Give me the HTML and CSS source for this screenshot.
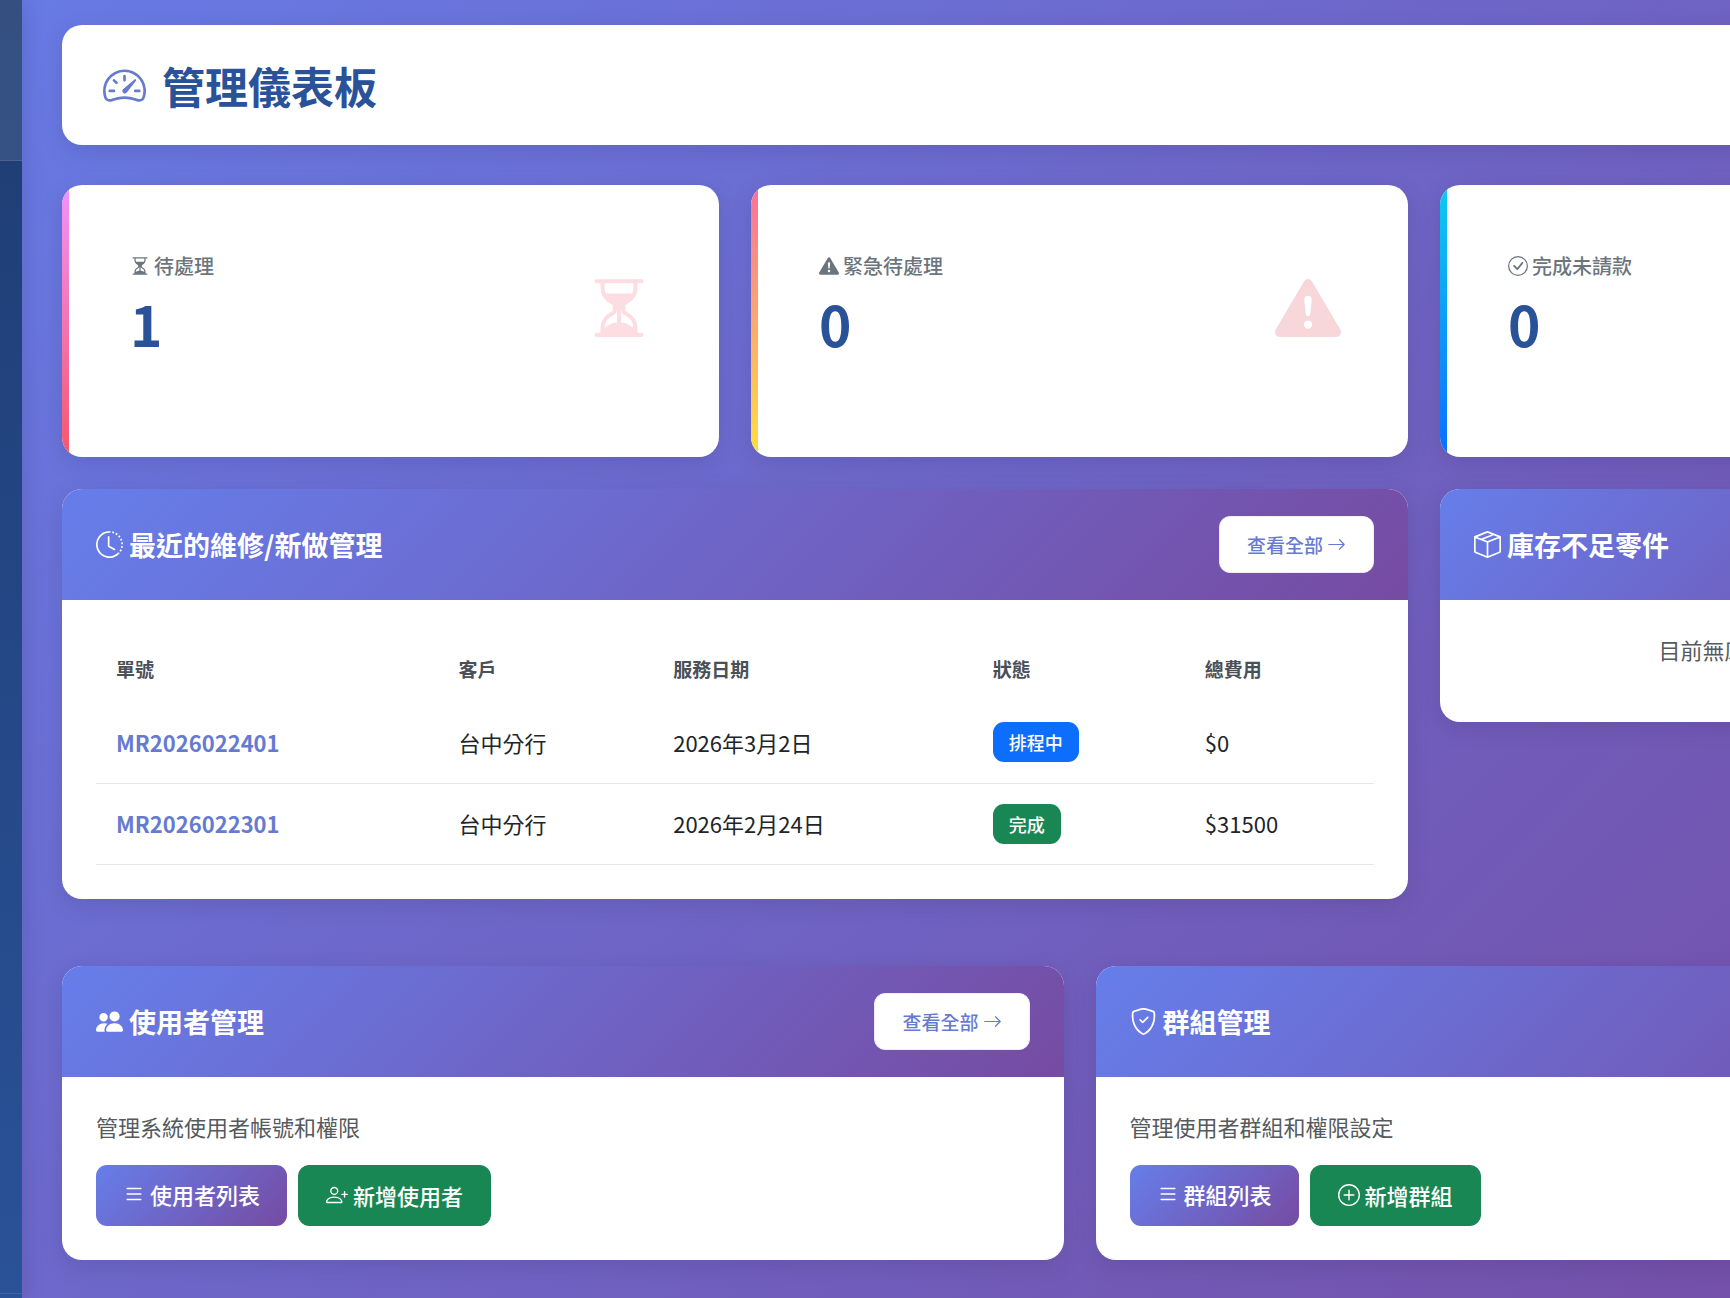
FILE: index.html
```html
<!DOCTYPE html>
<html lang="zh-Hant">
<head>
<meta charset="utf-8">
<meta name="viewport" content="width=device-width, initial-scale=1">
<title>管理儀表板</title>
<link rel="stylesheet" href="styles.css">
</head>
<body>
<svg class="sprite" aria-hidden="true">
  <symbol id="speedometer" viewBox="0 0 16 16"><path d="M8 4a.5.5 0 0 1 .5.5V6a.5.5 0 0 1-1 0V4.5A.5.5 0 0 1 8 4M3.732 5.732a.5.5 0 0 1 .707 0l.915.914a.5.5 0 1 1-.708.708l-.914-.915a.5.5 0 0 1 0-.707M2 10a.5.5 0 0 1 .5-.5h1.586a.5.5 0 0 1 0 1H2.5A.5.5 0 0 1 2 10m9.5 0a.5.5 0 0 1 .5-.5h1.5a.5.5 0 0 1 0 1H12a.5.5 0 0 1-.5-.5m.754-4.246a.39.39 0 0 0-.527-.02L7.547 9.31a.91.91 0 1 0 1.302 1.258l3.434-4.297a.39.39 0 0 0-.029-.518z"/><path fill-rule="evenodd" d="M0 10a8 8 0 1 1 15.547 2.661c-.442 1.253-1.845 1.602-2.932 1.25C11.309 13.488 9.475 13 8 13c-1.474 0-3.31.488-4.615.911-1.087.352-2.49.003-2.932-1.25A8 8 0 0 1 0 10m8-7a7 7 0 0 0-6.603 9.329c.203.575.923.876 1.68.63C4.397 12.533 6.358 12 8 12s3.604.532 4.923.96c.757.245 1.477-.056 1.68-.631A7 7 0 0 0 8 3"/></symbol>
  <symbol id="hourglass" viewBox="0 0 16 16"><path d="M2.5 15a.5.5 0 1 1 0-1h1v-1a4.5 4.5 0 0 1 2.557-4.06c.29-.139.443-.377.443-.59v-.7c0-.213-.154-.451-.443-.59A4.5 4.5 0 0 1 3.5 3V2h-1a.5.5 0 0 1 0-1h11a.5.5 0 0 1 0 1h-1v1a4.5 4.5 0 0 1-2.557 4.06c-.29.139-.443.377-.443.59v.7c0 .213.154.451.443.59A4.5 4.5 0 0 1 12.5 13v1h1a.5.5 0 0 1 0 1zm2-13v1c0 .537.12 1.045.337 1.5h6.326c.216-.455.337-.963.337-1.5V2zm3 6.35c0 .701-.478 1.236-1.011 1.492A3.5 3.5 0 0 0 4.5 13s.866-1.299 3-1.48zm1 0v3.17c2.134.181 3 1.48 3 1.48a3.5 3.5 0 0 0-1.989-3.158C8.978 9.586 8.5 9.052 8.5 8.351z"/></symbol>
  <symbol id="warning" viewBox="0 0 16 16"><path d="M8.982 1.566a1.13 1.13 0 0 0-1.96 0L.165 13.233c-.457.778.091 1.767.98 1.767h13.713c.889 0 1.438-.99.98-1.767zM8 5c.535 0 .954.462.9.995l-.35 3.507a.552.552 0 0 1-1.1 0L7.1 5.995A.905.905 0 0 1 8 5m.002 6a1 1 0 1 1 0 2 1 1 0 0 1 0-2"/></symbol>
  <symbol id="check-circle" viewBox="0 0 16 16"><path d="M8 15A7 7 0 1 1 8 1a7 7 0 0 1 0 14m0 1A8 8 0 1 0 8 0a8 8 0 0 0 0 16"/><path d="m10.97 4.97-.02.022-3.473 4.425-2.093-2.094a.75.75 0 0 0-1.06 1.06L6.97 11.03a.75.75 0 0 0 1.079-.02l3.992-4.99a.75.75 0 0 0-1.071-1.05"/></symbol>
  <symbol id="clock" viewBox="0 0 16 16"><path d="M8.515 1.019A7 7 0 0 0 8 1V0a8 8 0 0 1 .589.022zm2.004.45a7 7 0 0 0-.985-.299l.219-.976q.576.129 1.126.342zm1.37.71a7 7 0 0 0-.439-.27l.493-.87a8 8 0 0 1 .979.654l-.615.789a7 7 0 0 0-.418-.302zm1.834 1.79a7 7 0 0 0-.653-.796l.724-.69q.406.429.747.91zm.744 1.352a7 7 0 0 0-.214-.468l.893-.45a8 8 0 0 1 .45 1.088l-.95.313a7 7 0 0 0-.179-.483m.53 2.507a7 7 0 0 0-.1-1.025l.985-.17q.1.58.116 1.17zm-.131 1.538q.05-.254.081-.51l.993.123a8 8 0 0 1-.23 1.155l-.964-.267q.069-.247.12-.501m-.952 2.379q.276-.436.486-.908l.914.405q-.24.54-.555 1.038zm-.964 1.205q.183-.183.35-.378l.758.653a8 8 0 0 1-.401.432z"/><path d="M8 1a7 7 0 1 0 4.95 11.95l.707.707A8.001 8.001 0 1 1 8 0z"/><path d="M7.5 3a.5.5 0 0 1 .5.5v5.21l3.248 1.856a.5.5 0 0 1-.496.868l-3.5-2A.5.5 0 0 1 7 9V3.5a.5.5 0 0 1 .5-.5"/></symbol>
  <symbol id="arrow" viewBox="0 0 16 16"><path fill-rule="evenodd" d="M1 8a.5.5 0 0 1 .5-.5h11.793l-3.147-3.146a.5.5 0 0 1 .708-.708l4 4a.5.5 0 0 1 0 .708l-4 4a.5.5 0 0 1-.708-.708L13.293 8.5H1.5A.5.5 0 0 1 1 8"/></symbol>
  <symbol id="box" viewBox="0 0 16 16"><path d="M8.186 1.113a.5.5 0 0 0-.372 0L1.846 3.5l2.404.961L10.404 2zm3.564 1.426L5.596 5 8 5.961 14.154 3.5zm3.25 1.7-6.5 2.6v7.922l6.5-2.6V4.24zM7.5 14.762V6.838L1 4.239v7.923zM7.443.184a1.5 1.5 0 0 1 1.114 0l7.129 2.852A.5.5 0 0 1 16 3.5v8.662a1 1 0 0 1-.629.928l-7.185 2.874a.5.5 0 0 1-.372 0L.63 13.09a1 1 0 0 1-.63-.928V3.5a.5.5 0 0 1 .314-.464z"/></symbol>
  <symbol id="people" viewBox="0 0 16 16"><path d="M7 14s-1 0-1-1 1-4 5-4 5 3 5 4-1 1-1 1zm4-6a3 3 0 1 0 0-6 3 3 0 0 0 0 6m-5.784 6A2.24 2.24 0 0 1 5 13c0-1.355.68-2.75 1.936-3.72A6.3 6.3 0 0 0 5 9c-4 0-5 3-5 4s1 1 1 1zM4.5 8a2.5 2.5 0 1 0 0-5 2.5 2.5 0 0 0 0 5"/></symbol>
  <symbol id="shield" viewBox="0 0 16 16"><path d="M5.338 1.59a61 61 0 0 0-2.837.856.48.48 0 0 0-.328.39c-.554 4.157.726 7.19 2.253 9.188a10.7 10.7 0 0 0 2.287 2.233c.346.244.652.42.893.533q.18.085.293.118a1 1 0 0 0 .101.025 1 1 0 0 0 .1-.025q.114-.034.294-.118c.24-.113.547-.29.893-.533a10.7 10.7 0 0 0 2.287-2.233c1.527-1.997 2.807-5.031 2.253-9.188a.48.48 0 0 0-.328-.39c-.651-.213-1.75-.56-2.837-.855C9.552 1.29 8.531 1.067 8 1.067c-.53 0-1.552.223-2.662.524zM5.072.56C6.157.265 7.31 0 8 0s1.843.265 2.928.56c1.11.3 2.229.655 2.887.87a1.54 1.54 0 0 1 1.044 1.262c.596 4.477-.787 7.795-2.465 9.99a11.8 11.8 0 0 1-2.517 2.453 7 7 0 0 1-1.048.625c-.28.132-.581.24-.829.24s-.548-.108-.829-.24a7 7 0 0 1-1.048-.625 11.8 11.8 0 0 1-2.517-2.453C1.928 10.487.545 7.169 1.141 2.692A1.54 1.54 0 0 1 2.185 1.43 63 63 0 0 1 5.072.56"/><path d="M10.854 5.146a.5.5 0 0 1 0 .708l-3 3a.5.5 0 0 1-.708 0l-1.5-1.5a.5.5 0 1 1 .708-.708L7.5 7.793l2.646-2.647a.5.5 0 0 1 .708 0"/></symbol>
  <symbol id="list" viewBox="0 0 16 16"><path fill-rule="evenodd" d="M2.5 12a.5.5 0 0 1 .5-.5h10a.5.5 0 0 1 0 1H3a.5.5 0 0 1-.5-.5m0-4a.5.5 0 0 1 .5-.5h10a.5.5 0 0 1 0 1H3a.5.5 0 0 1-.5-.5m0-4a.5.5 0 0 1 .5-.5h10a.5.5 0 0 1 0 1H3a.5.5 0 0 1-.5-.5"/></symbol>
  <symbol id="person-plus" viewBox="0 0 16 16"><path d="M6 8a3 3 0 1 0 0-6 3 3 0 0 0 0 6m2-3a2 2 0 1 1-4 0 2 2 0 0 1 4 0m4 8c0 1-1 1-1 1H1s-1 0-1-1 1-4 6-4 6 3 6 4m-1-.004c-.001-.246-.154-.986-.832-1.664C9.516 10.68 8.289 10 6 10s-3.516.68-4.168 1.332c-.678.678-.83 1.418-.832 1.664z"/><path fill-rule="evenodd" d="M13.5 5a.5.5 0 0 1 .5.5V7h1.5a.5.5 0 0 1 0 1H14v1.5a.5.5 0 0 1-1 0V8h-1.5a.5.5 0 0 1 0-1H13V5.5a.5.5 0 0 1 .5-.5"/></symbol>
  <symbol id="plus-circle" viewBox="0 0 16 16"><path d="M8 15A7 7 0 1 1 8 1a7 7 0 0 1 0 14m0 1A8 8 0 1 0 8 0a8 8 0 0 0 0 16"/><path d="M8 4a.5.5 0 0 1 .5.5v3h3a.5.5 0 0 1 0 1h-3v3a.5.5 0 0 1-1 0v-3h-3a.5.5 0 0 1 0-1h3v-3A.5.5 0 0 1 8 4"/></symbol>
</svg>
<div class="app">
  <aside class="sidebar">
    <div class="sidebar-head"></div>
    <div class="sidebar-foot"></div>
  </aside>
  <main class="main">
    <header class="page-header">
      <h1 class="page-title"><svg class="icon"><use href="#speedometer"/></svg>管理儀表板</h1>
    </header>

    <section class="stats">
      <article class="stat stat-pending">
        <div>
          <h2 class="stat-label"><svg class="icon"><use href="#hourglass"/></svg>待處理</h2>
          <p class="stat-value">1</p>
        </div>
        <svg class="stat-icon"><use href="#hourglass"/></svg>
      </article>
      <article class="stat stat-urgent">
        <div>
          <h2 class="stat-label"><svg class="icon"><use href="#warning"/></svg>緊急待處理</h2>
          <p class="stat-value">0</p>
        </div>
        <svg class="stat-icon"><use href="#warning"/></svg>
      </article>
      <article class="stat stat-unbilled">
        <div>
          <h2 class="stat-label"><svg class="icon"><use href="#check-circle"/></svg>完成未請款</h2>
          <p class="stat-value">0</p>
        </div>
        <svg class="stat-icon"><use href="#check-circle"/></svg>
      </article>
    </section>

    <section class="overview">
      <article class="card card-wide">
        <header class="card-header">
          <h2 class="card-title"><svg class="icon"><use href="#clock"/></svg>最近的維修/新做管理</h2>
          <a class="btn btn-light" href="#all-orders">查看全部<svg class="icon"><use href="#arrow"/></svg></a>
        </header>
        <div class="card-body">
          <table class="orders">
            <colgroup><col class="col-id"><col class="col-client"><col class="col-date"><col class="col-status"><col></colgroup>
            <thead>
              <tr><th scope="col">單號</th><th scope="col">客戶</th><th scope="col">服務日期</th><th scope="col">狀態</th><th scope="col">總費用</th></tr>
            </thead>
            <tbody>
              <tr><td><a class="order-link" href="#MR2026022401">MR2026022401</a></td><td>台中分行</td><td>2026年3月2日</td><td><span class="badge badge-scheduled">排程中</span></td><td>$0</td></tr>
              <tr><td><a class="order-link" href="#MR2026022301">MR2026022301</a></td><td>台中分行</td><td>2026年2月24日</td><td><span class="badge badge-done">完成</span></td><td>$31500</td></tr>
            </tbody>
          </table>
        </div>
      </article>
      <article class="card">
        <header class="card-header">
          <h2 class="card-title"><svg class="icon"><use href="#box"/></svg>庫存不足零件</h2>
        </header>
        <div class="card-body">
          <p class="note note-center">目前無庫存不足的零件</p>
        </div>
      </article>
    </section>

    <section class="admin">
      <article class="card">
        <header class="card-header">
          <h2 class="card-title"><svg class="icon"><use href="#people"/></svg>使用者管理</h2>
          <a class="btn btn-light" href="#all-users">查看全部<svg class="icon"><use href="#arrow"/></svg></a>
        </header>
        <div class="card-body">
          <p class="note">管理系統使用者帳號和權限</p>
          <div class="actions">
            <a class="btn btn-primary" href="#users"><svg class="icon"><use href="#list"/></svg>使用者列表</a>
            <a class="btn btn-success" href="#new-user"><svg class="icon"><use href="#person-plus"/></svg>新增使用者</a>
          </div>
        </div>
      </article>
      <article class="card">
        <header class="card-header">
          <h2 class="card-title"><svg class="icon"><use href="#shield"/></svg>群組管理</h2>
        </header>
        <div class="card-body">
          <p class="note">管理使用者群組和權限設定</p>
          <div class="actions">
            <a class="btn btn-primary" href="#groups"><svg class="icon"><use href="#list"/></svg>群組列表</a>
            <a class="btn btn-success" href="#new-group"><svg class="icon"><use href="#plus-circle"/></svg>新增群組</a>
          </div>
        </div>
      </article>
    </section>
  </main>
</div>
</body>
</html>
```
FILE: styles.css
```css
:root {
  --accent: linear-gradient(135deg, #667eea 0%, #764ba2 100%);
  --shadow: 0 6px 24px rgba(0, 0, 0, 0.1);
  --navy: #2a5298;
  --indigo: #667bd0;
  --gap: 32px;
}

* {
  box-sizing: border-box;
}

body {
  margin: 0;
  overflow: hidden;
  font-family: "Noto Sans CJK TC", "Noto Sans", sans-serif;
  font-size: 22px;
  line-height: 33px;
  color: #212529;
}

h1,
h2,
p {
  margin: 0;
}

a {
  text-decoration: none;
}

.sprite {
  display: none;
}

.icon {
  width: 1em;
  height: 1em;
  flex: none;
  fill: currentColor;
}

.app {
  display: flex;
  min-width: 2137px;
  min-height: 100vh;
  background: linear-gradient(135deg, #667eea -8%, #764ba2 100%);
}

/* Collapsed navigation rail */
.sidebar {
  display: flex;
  flex-direction: column;
  justify-content: space-between;
  flex: none;
  width: 22px;
  background: linear-gradient(180deg, #1e3c72 0%, #2a5298 100%);
  box-shadow: 4px 0 20px rgba(0, 0, 0, 0.1);
}

.sidebar-head {
  height: 161px;
  background: rgba(255, 255, 255, 0.1);
  border-bottom: 1px solid rgba(255, 255, 255, 0.1);
}

.sidebar-foot {
  height: 6px;
  border-top: 1px solid rgba(255, 255, 255, 0.1);
}

.main {
  flex: 1;
  padding: 25px 40px 39px;
}

.page-header {
  margin-bottom: 40px;
  padding: 30px 41px;
  border-radius: 20px;
  background: #fff;
  box-shadow: var(--shadow);
}

.page-title {
  display: flex;
  align-items: center;
  gap: 16px;
  font-size: 43px;
  line-height: 60px;
  font-weight: 700;
  color: var(--navy);
}

.page-title .icon {
  color: var(--indigo);
}

.stats,
.overview {
  display: grid;
  grid-template-columns: repeat(3, 1fr);
  gap: var(--gap);
  align-items: start;
}

.stats {
  margin-bottom: 32px;
}

.stat {
  position: relative;
  display: flex;
  justify-content: space-between;
  align-items: center;
  padding: 66px 67px 92px 68px;
  border-radius: 20px;
  overflow: hidden;
  background: #fff;
  box-shadow: var(--shadow);
}

.stat::before {
  content: "";
  position: absolute;
  inset: 0 auto 0 0;
  width: 7px;
  background: var(--bar);
}

.stat-pending {
  --bar: linear-gradient(180deg, #f093fb 0%, #f5576c 100%);
  --tint: #fddde2;
}

.stat-urgent {
  --bar: linear-gradient(180deg, #fa709a 0%, #fee140 100%);
  --tint: #f8d7da;
}

.stat-unbilled {
  --bar: linear-gradient(180deg, #0dcaf0 0%, #0d6efd 100%);
  --tint: #cfe2ff;
}

.stat-label {
  display: flex;
  align-items: center;
  gap: 4px;
  margin-bottom: 8px;
  font-size: 20px;
  line-height: 30px;
  font-weight: 500;
  color: #6c757d;
}

.stat-value {
  padding-bottom: 8px;
  font-size: 55px;
  line-height: 68px;
  font-weight: 700;
  color: var(--navy);
}

.stat-icon {
  width: 66px;
  height: 66px;
  fill: var(--tint);
}

.card {
  border-radius: 20px;
  overflow: hidden;
  background: #fff;
  box-shadow: var(--shadow);
}

.card-wide {
  grid-column: span 2;
}

.card-header {
  display: flex;
  justify-content: space-between;
  align-items: center;
  min-height: 111px;
  padding: 27px 34px;
  background: var(--accent);
}

.card-title {
  display: flex;
  align-items: center;
  gap: 6px;
  font-size: 27px;
  line-height: 33px;
  font-weight: 700;
  color: #fff;
}

.card-body {
  padding: 34px;
}

.btn {
  display: inline-flex;
  align-items: center;
  gap: 5px;
  padding: 13px 27px 15px;
  border-radius: 11px;
  font-weight: 500;
  color: #fff;
}

.btn-light {
  gap: 4px;
  padding: 12px 27px;
  border: 1px solid #f0ecf8;
  font-size: 19px;
  line-height: 31px;
  background: #fff;
  color: var(--indigo);
}

.btn-primary {
  background: var(--accent);
}

.btn-success {
  padding: 13px 27px;
  border: 1px solid #198754;
  background: #198754;
}

.orders {
  width: 100%;
  table-layout: fixed;
  border-collapse: collapse;
}

.col-id {
  width: 26.8%;
}

.col-client {
  width: 16.8%;
}

.col-date {
  width: 25%;
}

.col-status {
  width: 16.6%;
}

.orders th,
.orders td {
  padding: 0 20px;
  text-align: left;
  vertical-align: middle;
}

.orders th {
  height: 68px;
  font-size: 19px;
  font-weight: 700;
  color: #495057;
}

.orders td {
  height: 81px;
  border-bottom: 1px solid #e5e8ea;
}

.order-link {
  font-weight: 700;
  color: var(--indigo);
}

.badge {
  display: inline-block;
  padding: 5px 16px;
  border-radius: 11px;
  font-size: 18px;
  line-height: 30px;
  font-weight: 500;
  vertical-align: middle;
  color: #fff;
}

.badge-scheduled {
  background: #0d6efd;
}

.badge-done {
  background: #198754;
}

.note {
  margin-bottom: 23px;
  line-height: 31px;
  color: #555a5e;
}

.note-center {
  text-align: center;
}

.admin {
  display: grid;
  grid-template-columns: repeat(2, 1fr);
  gap: var(--gap);
  margin-top: 67px;
}

.actions {
  display: flex;
  gap: 11px;
}
```
